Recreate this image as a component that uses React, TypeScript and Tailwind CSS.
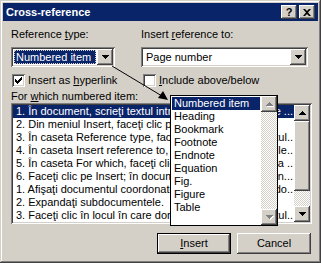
const RAISED =
  'shadow-[inset_-1px_-1px_#404040,inset_1px_1px_#ffffff,inset_-2px_-2px_#808080,inset_2px_2px_#d4d0c8]'

interface Row {
  text: string
  tail: string
}

const ROWS: Row[] = [
  { text: '1. În document, scrieţi textul introductiv care înc', tail: 'e ...' },
  { text: '2. Din meniul Insert, faceţi clic pe Cross-reference.', tail: '' },
  { text: '3. În caseta Reference type, faceţi clic pe Numbered item. Tex', tail: 'tul..' },
  { text: '4. În caseta Insert reference to, faceţi clic pe informaţi', tail: 'ile..' },
  { text: '5. În caseta For which, faceţi clic pe elementul dorit la ', tail: 'la ..' },
  { text: '6. Faceţi clic pe Insert; în documentul coordonator se in', tail: 'in...' },
  { text: '1. Afişaţi documentul coordonator în modul Outline; do', tail: 'do..' },
  { text: '2. Expandaţi subdocumentele.', tail: '' },
  { text: '3. Faceţi clic în locul în care doriţi să inseraţi tex', tail: 'tul..' },
]

const TYPES = ['Numbered item', 'Heading', 'Bookmark', 'Footnote', 'Endnote', 'Equation', 'Fig.', 'Figure', 'Table']

function Tri({ dir, disabled = false }: { dir: 'up' | 'down'; disabled?: boolean }) {
  const d =
    dir === 'down'
      ? 'M0 0h7v1H0zM1 1h5v1H1zM2 2h3v1H2zM3 3h1v1H3z'
      : 'M3 0h1v1H3zM2 1h3v1H2zM1 2h5v1H1zM0 3h7v1H0z'
  return (
    <svg width="8" height="5" viewBox="0 0 8 5" className="block">
      {disabled && <path d={d} fill="#ffffff" transform="translate(1 1)" />}
      <path d={d} fill={disabled ? '#808080' : '#000000'} />
    </svg>
  )
}

function ArrowBtn({ dir, disabled = false }: { dir: 'up' | 'down'; disabled?: boolean }) {
  return (
    <div className={`w-[16px] h-[16px] shrink-0 bg-[#d4d0c8] flex items-center justify-center pl-[1px] ${RAISED}`}>
      <Tri dir={dir} disabled={disabled} />
    </div>
  )
}

function Checkbox({ checked }: { checked: boolean }) {
  return (
    <div className="w-[13px] h-[13px] bg-white shrink-0 flex items-center justify-center shadow-[inset_1px_1px_#808080,inset_-1px_-1px_#ffffff,inset_2px_2px_#404040,inset_-2px_-2px_#d4d0c8]">
      {checked && (
        <svg width="7" height="7" viewBox="0 0 7 7" className="block">
          <path d="M0 2h1v1h1v1h1V3h1V2h1V1h1V0h1v3H6v1H5v1H4v1H3v1H2V6H1V5H0z" fill="#000000" />
        </svg>
      )}
    </div>
  )
}

function Scrollbar() {
  return (
    <div className="w-[16px] shrink-0 flex flex-col">
      <ArrowBtn dir="up" />
      <div className={`h-[70px] bg-[#d4d0c8] ${RAISED}`} />
      <div className="flex-1 bg-[repeating-conic-gradient(#d4d0c8_0_25%,#ffffff_0_50%)] bg-[length:2px_2px]" />
      <ArrowBtn dir="down" />
    </div>
  )
}

export default function App() {
  return (
    <div
      className={`relative w-[321px] h-[263px] overflow-hidden bg-[#d4d0c8] p-[3px] text-[11px] leading-[13px] text-black font-['Liberation_Sans',Arial,sans-serif] shadow-[inset_-1px_-1px_#404040,inset_1px_1px_#d4d0c8,inset_-2px_-2px_#808080,inset_2px_2px_#ffffff]`}
    >
      {/* title bar */}
      <div className="h-[18px] bg-[#0a246a] flex items-center justify-between pl-[3px] pr-[3px]">
        <span className="text-white font-bold">Cross-reference</span>
        <div className="flex gap-[2px]">
          <div className={`w-[16px] h-[14px] bg-[#d4d0c8] flex items-center justify-center font-bold text-[11px] leading-none ${RAISED}`}>
            ?
          </div>
          <div className={`w-[16px] h-[14px] bg-[#d4d0c8] flex items-center justify-center ${RAISED}`}>
            <svg width="8" height="7" viewBox="0 0 8 7" className="block">
              <path d="M0 0h2l2 2 2-2h2L5 3.5 8 7H6L4 5 2 7H0l3-3.5z" fill="#000000" />
            </svg>
          </div>
        </div>
      </div>

      <div className="pl-[8px] pr-[7px] pt-[7px]">
        <div className="flex">
          <div className="w-[130px]">
            <div>
              Reference <span className="underline">t</span>ype:
            </div>
            <div className="mt-[6px] w-[104px] h-[20px] bg-white p-[2px] flex shadow-[inset_1px_1px_#808080,inset_-1px_-1px_#ffffff,inset_2px_2px_#404040,inset_-2px_-2px_#d4d0c8]">
              <div className="flex-1 p-[1px]">
                <div className="h-full bg-[#0a246a] text-white outline-1 outline-dotted outline-[#d4d0c8] -outline-offset-1 pl-[2px] leading-[14px]">
                  Numbered item
                </div>
              </div>
              <ArrowBtn dir="down" />
            </div>
          </div>
          <div>
            <div>
              Insert <span className="underline">r</span>eference to:
            </div>
            <div className="mt-[6px] w-[167px] h-[20px] bg-white p-[2px] flex shadow-[inset_1px_1px_#808080,inset_-1px_-1px_#ffffff,inset_2px_2px_#404040,inset_-2px_-2px_#d4d0c8]">
              <div className="flex-1 pl-[3px] leading-[16px]">Page number</div>
              <ArrowBtn dir="down" />
            </div>
          </div>
        </div>

        <div className="flex mt-[7px]">
          <div className="w-[130px] flex items-center gap-[3px] pl-[1px]">
            <Checkbox checked />
            <span>
              Insert as <span className="underline">h</span>yperlink
            </span>
          </div>
          <div className="flex items-center gap-[3px] pl-[2px]">
            <Checkbox checked={false} />
            <span>
              <span className="underline">I</span>nclude above/below
            </span>
          </div>
        </div>

        <div className="mt-[3px]">
          For <span className="underline">w</span>hich numbered item:
        </div>

        <div className="w-[301px] h-[121px] bg-white p-[2px] flex shadow-[inset_1px_1px_#808080,inset_-1px_-1px_#ffffff,inset_2px_2px_#404040,inset_-2px_-2px_#d4d0c8]">
          <div className="flex-1 min-w-0 flex flex-col">
            {ROWS.map((row, i) => (
              <div
                key={i}
                className={`h-[13px] flex pl-[3px] pr-[1px] whitespace-nowrap ${i === 0 ? 'bg-[#0a246a] text-white' : ''}`}
              >
                <span className="flex-1 min-w-0 overflow-hidden">{row.text}</span>
                <span className="shrink-0">{row.tail}</span>
              </div>
            ))}
          </div>
          <Scrollbar />
        </div>

        <div className="mt-[9px] flex justify-end gap-[6px]">
          <div className="w-[74px] h-[21px] border border-black">
            <div className={`h-full bg-[#d4d0c8] flex items-center justify-center ${RAISED}`}>
              <span>
                <span className="underline">I</span>nsert
              </span>
            </div>
          </div>
          <div className={`w-[74px] h-[21px] bg-[#d4d0c8] flex items-center justify-center ${RAISED}`}>Cancel</div>
        </div>
      </div>

      {/* dropped-down list of reference types */}
      <div className="absolute left-[170px] top-[95px] w-[108px] h-[131px] bg-white border border-black flex">
        <div className="flex-1 p-[1px]">
          {TYPES.map((t, i) => (
            <div key={t} className={`h-[13px] pl-[2px] ${i === 0 ? 'bg-[#0a246a] text-white' : ''}`}>
              {t}
            </div>
          ))}
        </div>
        <div className="w-[16px] flex flex-col">
          <ArrowBtn dir="up" disabled />
          <div className="flex-1 bg-[repeating-conic-gradient(#d4d0c8_0_25%,#ffffff_0_50%)] bg-[length:2px_2px]" />
          <ArrowBtn dir="down" disabled />
        </div>
      </div>

      {/* pointer from the combo to the list */}
      <svg className="absolute left-0 top-0 pointer-events-none" width="321" height="263" viewBox="0 0 321 263">
        <line x1="112" y1="66" x2="162" y2="96" stroke="#000000" strokeWidth="1" />
        <polygon points="168,100 158,98 163,91" fill="#000000" />
      </svg>
    </div>
  )
}
